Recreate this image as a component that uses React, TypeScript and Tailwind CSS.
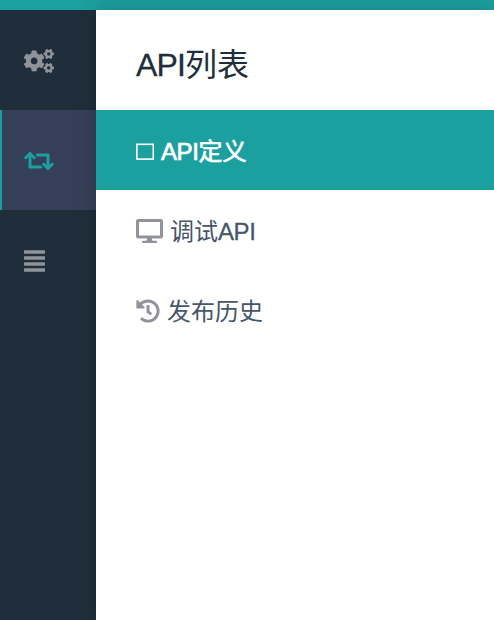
import { FaCogs, FaDesktop, FaHistory, FaRetweet } from "react-icons/fa";

function Bars() {
  return (
    <svg className="h-[22px] w-[21px]" viewBox="0 0 21 22" fill="#909399">
      {[0, 6, 12, 18].map((y) => (
        <rect key={y} x="0" y={y + 0.3} width="21" height="3.4" rx="0.4" />
      ))}
    </svg>
  );
}

function Square() {
  return (
    <svg className="-mt-px mr-[7px] h-[17px] w-[18px]" viewBox="0 0 18 17" fill="none" stroke="#fff" strokeWidth="1.6">
      <rect x="0.9" y="1.3" width="16.4" height="14.8" />
    </svg>
  );
}

export default function App() {
  return (
    <div className="flex h-[620px] w-full flex-col overflow-hidden bg-white font-['Liberation_Sans','Noto_Sans_CJK_SC',sans-serif]">
      <header className="h-[10px] shrink-0 bg-[#1c9f9f]" />
      <div className="flex flex-1">
        <nav className="w-24 shrink-0 bg-[#202e3b]">
          <a className="flex h-[100px] items-center pt-0.5 pl-6">
            <FaCogs className="h-6 w-[30px] text-[#909399]" />
          </a>
          <a className="flex h-[100px] items-center border-l-2 border-[#1c9f9f] bg-[#354058] pt-0.5 pl-[22px]">
            <FaRetweet className="h-6 w-[30px] text-[#1c9f9f]" />
          </a>
          <a className="flex h-[100px] items-center pt-0.5 pl-6">
            <Bars />
          </a>
        </nav>
        <aside className="flex-1 bg-white shadow-[0_0_20px_rgba(0,0,0,0.2)]">
          <h1 className="flex h-[100px] items-center pt-2.5 pl-10 text-[32px] leading-none text-[#202e3b]">
            <span className="tracking-[-0.9px] [-webkit-text-stroke:0.3px_#202e3b]">API</span>列表
          </h1>
          <a className="flex h-20 items-center bg-[#1c9f9f] pt-1 pl-10 text-2xl leading-none text-white">
            <Square />
            <span className="[-webkit-text-stroke:0.7px_white]">
              <span className="tracking-[-0.4px]">API</span>定义
            </span>
          </a>
          <a className="flex h-20 items-center pt-0.5 pl-10 text-2xl leading-none text-[#475669]">
            <FaDesktop className="mr-[7px] h-6 w-[27px] text-[#909399]" />
            <span className="pt-0.5">
              调试<span className="tracking-[-0.4px] [-webkit-text-stroke:0.3px_#475669]">API</span>
            </span>
          </a>
          <a className="flex h-20 items-center pt-0.5 pl-10 text-2xl leading-none text-[#475669]">
            <FaHistory className="mr-[7px] h-6 w-6 text-[#909399]" />
            <span className="pt-0.5">发布历史</span>
          </a>
        </aside>
      </div>
    </div>
  );
}
